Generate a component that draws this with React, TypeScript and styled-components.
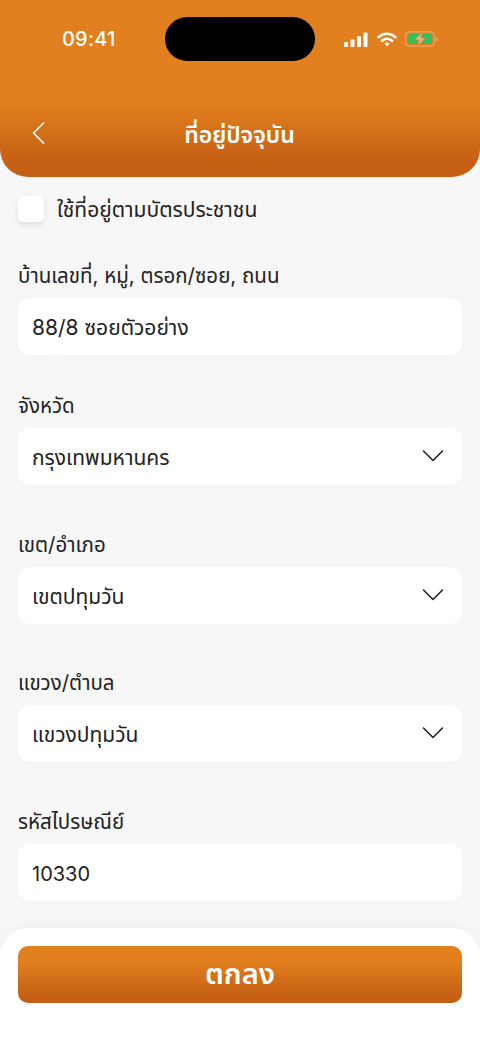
import styled, { createGlobalStyle } from "styled-components";

const GlobalStyle = createGlobalStyle`
    html, body {
        margin: 0;
        padding: 0;
        background: #f7f7f7;
    }
    * {
        box-sizing: border-box;
    }
`;

const font = `Inter, "Noto Sans", "Noto Sans Thai", "Liberation Sans", sans-serif`;
const orange = `linear-gradient(180deg, #e27f1e 0%, #e27f1e 58%, #c55f14 92%, #c55f14 100%)`;

function Chevron() {
    return (
        <ChevronIcon width="22" height="14" viewBox="0 0 22 14">
            <path d="M1.5 2 L11 11.5 L20.5 2" fill="none" stroke="#222" strokeWidth="1.6" strokeLinecap="round" strokeLinejoin="round" />
        </ChevronIcon>
    );
}

function Field({ label, value, select, spacing }: { label: string; value: string; select?: boolean; spacing: number }) {
    return (
        <FieldWrap $spacing={spacing}>
            <Label>{label}</Label>
            <Box>
                <Value $latin={/^[0-9]+$/.test(value)}>{value}</Value>
                {select && <Chevron />}
            </Box>
        </FieldWrap>
    );
}

export default function App() {
    return (
        <>
            <GlobalStyle />
            <Page>
                <Header>
                    <StatusBar>
                        <Time>09:41</Time>
                        <Island />
                        <StatusIcons>
                            <svg width="24" height="15" viewBox="0 0 24 15">
                                <rect x="0" y="10" width="4" height="5" rx="1" fill="#fff" />
                                <rect x="6.5" y="7.5" width="4" height="7.5" rx="1" fill="#fff" />
                                <rect x="13" y="4" width="4" height="11" rx="1" fill="#fff" />
                                <rect x="19.5" y="0.5" width="4" height="14.5" rx="1" fill="#fff" />
                            </svg>
                            <svg width="20" height="15" viewBox="0 0 20 15">
                                <path d="M1.5 5.2 C6.3 0.6 13.7 0.6 18.5 5.2" fill="none" stroke="#fff" strokeWidth="2.6" strokeLinecap="round" />
                                <path d="M5 8.8 C7.9 6.2 12.1 6.2 15 8.8" fill="none" stroke="#fff" strokeWidth="2.6" strokeLinecap="round" />
                                <path d="M7.4 11.6 L10 14.6 L12.6 11.6 C11 10.2 9 10.2 7.4 11.6 Z" fill="#fff" />
                            </svg>
                            <svg width="33" height="16" viewBox="0 0 33 16">
                                <rect x="0.6" y="0.8" width="28.8" height="14.4" rx="4" fill="none" stroke="#eda868" strokeWidth="1.2" />
                                <rect x="3" y="3" width="24" height="10" rx="2.2" fill="#35bf5c" />
                                <path d="M31 5.5 C32.2 6 32.6 7 32.6 8 C32.6 9 32.2 10 31 10.5 Z" fill="#eda868" />
                                <path d="M18 0.6 L9 9 L14 9 L12 15.4 L21 7 L16 7 Z" fill="#f0b27a" stroke="#e27f1e" strokeWidth="0.8" />
                            </svg>
                        </StatusIcons>
                    </StatusBar>
                    <NavBar>
                        <BackButton>
                            <svg width="14" height="24" viewBox="0 0 14 24">
                                <path d="M12.5 2 L2.5 12 L12.5 22" fill="none" stroke="#fff" strokeWidth="1.7" strokeLinecap="round" strokeLinejoin="round" />
                            </svg>
                        </BackButton>
                        <Title>ที่อยู่ปัจจุบัน</Title>
                    </NavBar>
                </Header>
                <Content>
                    <CheckRow>
                        <CheckBox />
                        <CheckLabel>ใช้ที่อยู่ตามบัตรประชาชน</CheckLabel>
                    </CheckRow>
                    <Field spacing={40} label="บ้านเลขที่, หมู่, ตรอก/ซอย, ถนน" value="88/8 ซอยตัวอย่าง" />
                    <Field spacing={37} label="จังหวัด" value="กรุงเทพมหานคร" select />
                    <Field spacing={46} label="เขต/อำเภอ" value="เขตปทุมวัน" select />
                    <Field spacing={45} label="แขวง/ตำบล" value="แขวงปทุมวัน" select />
                    <Field spacing={46} label="รหัสไปรษณีย์" value="10330" />
                </Content>
                <Footer>
                    <SubmitButton>ตกลง</SubmitButton>
                </Footer>
            </Page>
        </>
    );
}

// style
const Page = styled.div`
    width: 480px;
    height: 1044px;
    display: flex;
    flex-direction: column;
    background: #f7f7f7;
    font-family: ${font};
    color: #222;
    overflow: hidden;
`;

const Header = styled.header`
    height: 177px;
    flex: none;
    background: ${orange};
    border-radius: 0 0 28px 28px;
    color: #fff;
    padding-top: 17px;
`;

const StatusBar = styled.div`
    height: 44px;
    display: flex;
    align-items: center;
`;

const Time = styled.div`
    width: 53px;
    margin-left: 62px;
    white-space: nowrap;
    font-size: 20px;
    font-weight: 500;
    letter-spacing: 0.2px;
`;

const Island = styled.div`
    width: 150px;
    height: 44px;
    margin-left: 50px;
    border-radius: 22px;
    background: #000;
`;

const StatusIcons = styled.div`
    display: flex;
    align-items: center;
    gap: 8.5px;
    margin-left: 29px;
`;

const NavBar = styled.div`
    height: 38px;
    margin-top: 56px;
    padding: 0 32px 0 31px;
    display: grid;
    grid-template-columns: 60px 1fr 60px;
    align-items: center;
`;

const BackButton = styled.div`
    display: flex;
    margin-top: -6px;
`;

const Title = styled.div`
    font-size: 23px;
    font-weight: 600;
    text-align: center;
    white-space: nowrap;
`;

const Content = styled.main`
    flex: 1;
    padding: 19px 18px 0;
`;

const CheckRow = styled.div`
    display: flex;
    align-items: center;
    gap: 13px;
    height: 26px;
`;

const CheckBox = styled.div`
    width: 26px;
    height: 26px;
    border-radius: 5px;
    background: #fff;
    box-shadow: 0 3px 6px rgba(0, 0, 0, 0.1);
`;

const CheckLabel = styled.div`
    font-size: 21px;
    margin-top: 3px;
`;

const FieldWrap = styled.div<{ $spacing: number }>`
    margin-top: ${(p) => p.$spacing}px;
`;

const Label = styled.div`
    font-size: 20.5px;
    line-height: 28px;
    margin-bottom: 8px;
`;

const Box = styled.div`
    height: 57px;
    border-radius: 12px;
    background: #fff;
    padding: 0 18px 0 14px;
    display: flex;
    align-items: center;
    justify-content: space-between;
    box-shadow: 0 2px 8px rgba(0, 0, 0, 0.02);
`;

const Value = styled.span<{ $latin: boolean }>`
    font-size: ${(p) => (p.$latin ? 20 : 21)}px;
    padding-top: 3px;
`;

const ChevronIcon = styled.svg`
    flex: none;
    margin-bottom: 2px;
`;

const Footer = styled.footer`
    height: 116px;
    flex: none;
    background: #fff;
    border-radius: 28px 28px 0 0;
    padding: 18px 18px 0;
    box-shadow: 0 -4px 12px rgba(0, 0, 0, 0.03);
`;

const SubmitButton = styled.div`
    height: 57px;
    border-radius: 10px;
    background: linear-gradient(180deg, #e27f1e 0%, #e27f1e 25%, #c55f14 90%);
    color: #fff;
    font-size: 29px;
    font-weight: 600;
    display: flex;
    align-items: center;
    justify-content: center;
`;
